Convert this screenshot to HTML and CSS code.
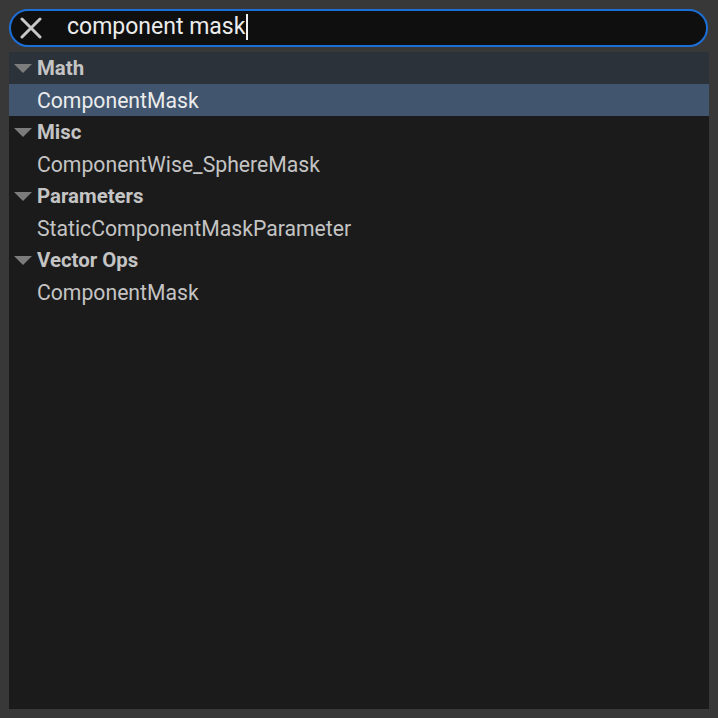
FILE: index.html
```html
<!DOCTYPE html>
<html>
<head>
<meta charset="utf-8">
<link rel="stylesheet" href="styles.css">
</head>
<body>
<div class="app">
  <div class="search">
    <svg class="clear" width="22" height="22" viewBox="0 0 22 22"><path d="M2 2 L20 20 M20 2 L2 20" stroke="#c8c8c8" stroke-width="3" stroke-linecap="round"/></svg>
    <span class="query">component mask</span><span class="caret"></span>
  </div>
  <div class="list">
    <div class="row header hover"><span class="tri"></span>Math</div>
    <div class="row item selected">ComponentMask</div>
    <div class="row header"><span class="tri"></span>Misc</div>
    <div class="row item">ComponentWise_SphereMask</div>
    <div class="row header"><span class="tri"></span>Parameters</div>
    <div class="row item">StaticComponentMaskParameter</div>
    <div class="row header"><span class="tri"></span>Vector Ops</div>
    <div class="row item">ComponentMask</div>
  </div>
</div>
</body>
</html>
```
FILE: styles.css
```css
html, body {
  margin: 0;
  padding: 0;
  background: #383838;
  width: 718px;
  height: 718px;
  overflow: hidden;
  font-family: Roboto, "Liberation Sans", sans-serif;
}
.app {
  padding: 9px 9px 9px 9px;
  display: flex;
  flex-direction: column;
  height: 700px;
}
.search {
  height: 34px;
  margin-right: 1px;
  border: 2px solid #1d6fd8;
  border-radius: 19px;
  background: #0f0f0f;
  display: flex;
  align-items: center;
  padding-left: 9px;
}
.clear {
  flex: none;
  margin-top: -1px;
}
.query {
  margin-left: 25px;
  font-size: 23px;
  color: #ececec;
  margin-top: -3px;
}
.caret {
  width: 2px;
  height: 26px;
  background: #f0f0f0;
  margin-left: 1px;
  margin-top: -3px;
}
.list {
  margin-top: 5px;
  flex: 1;
  background: #1b1b1b;
}
.row {
  height: 32px;
  display: flex;
  align-items: center;
  font-size: 21.2px;
  color: #c4c4c4;
}
.header {
  font-weight: bold;
  font-size: 20.4px;
  padding-left: 5px;
}
.header.hover {
  background: #2c323a;
}
.tri {
  width: 0;
  height: 0;
  border-left: 9px solid transparent;
  border-right: 9px solid transparent;
  border-top: 9px solid #7c7c7c;
  margin-right: 5px;
  margin-top: 1px;
}
.item {
  padding-left: 28px;
}
.selected {
  background: #41566e;
  color: #ececec;
}
```
